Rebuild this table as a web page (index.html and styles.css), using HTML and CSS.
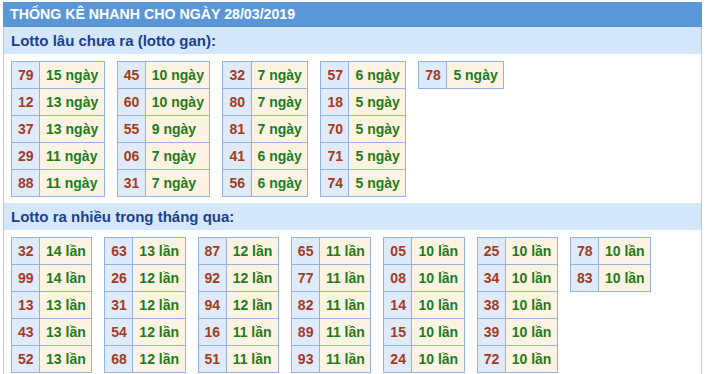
FILE: index.html
```html
<!DOCTYPE html>
<html lang="vi">
<head>
<meta charset="utf-8">
<title>Thống kê nhanh</title>
<link rel="stylesheet" href="styles.css">
</head>
<body>
<div class="box">
  <div class="head">THỐNG KÊ NHANH CHO NGÀY 28/03/2019</div>
  <div class="body">
    <div class="band">Lotto lâu chưa ra (lotto gan):</div>
    <div class="tables">
      <table><tr><td class="n">79</td><td class="d">15 ngày</td></tr><tr><td class="n">12</td><td class="d">13 ngày</td></tr><tr><td class="n">37</td><td class="d">13 ngày</td></tr><tr><td class="n">29</td><td class="d">11 ngày</td></tr><tr><td class="n">88</td><td class="d">11 ngày</td></tr></table>
      <table><tr><td class="n">45</td><td class="d">10 ngày</td></tr><tr><td class="n">60</td><td class="d">10 ngày</td></tr><tr><td class="n">55</td><td class="d">9 ngày</td></tr><tr><td class="n">06</td><td class="d">7 ngày</td></tr><tr><td class="n">31</td><td class="d">7 ngày</td></tr></table>
      <table><tr><td class="n">32</td><td class="d">7 ngày</td></tr><tr><td class="n">80</td><td class="d">7 ngày</td></tr><tr><td class="n">81</td><td class="d">7 ngày</td></tr><tr><td class="n">41</td><td class="d">6 ngày</td></tr><tr><td class="n">56</td><td class="d">6 ngày</td></tr></table>
      <table><tr><td class="n">57</td><td class="d">6 ngày</td></tr><tr><td class="n">18</td><td class="d">5 ngày</td></tr><tr><td class="n">70</td><td class="d">5 ngày</td></tr><tr><td class="n">71</td><td class="d">5 ngày</td></tr><tr><td class="n">74</td><td class="d">5 ngày</td></tr></table>
      <table><tr><td class="n">78</td><td class="d">5 ngày</td></tr></table>
    </div>
    <div class="band">Lotto ra nhiều trong tháng qua:</div>
    <div class="tables">
      <table><tr><td class="n">32</td><td class="d">14 lần</td></tr><tr><td class="n">99</td><td class="d">14 lần</td></tr><tr><td class="n">13</td><td class="d">13 lần</td></tr><tr><td class="n">43</td><td class="d">13 lần</td></tr><tr><td class="n">52</td><td class="d">13 lần</td></tr></table>
      <table><tr><td class="n">63</td><td class="d">13 lần</td></tr><tr><td class="n">26</td><td class="d">12 lần</td></tr><tr><td class="n">31</td><td class="d">12 lần</td></tr><tr><td class="n">54</td><td class="d">12 lần</td></tr><tr><td class="n">68</td><td class="d">12 lần</td></tr></table>
      <table><tr><td class="n">87</td><td class="d">12 lần</td></tr><tr><td class="n">92</td><td class="d">12 lần</td></tr><tr><td class="n">94</td><td class="d">12 lần</td></tr><tr><td class="n">16</td><td class="d">11 lần</td></tr><tr><td class="n">51</td><td class="d">11 lần</td></tr></table>
      <table><tr><td class="n">65</td><td class="d">11 lần</td></tr><tr><td class="n">77</td><td class="d">11 lần</td></tr><tr><td class="n">82</td><td class="d">11 lần</td></tr><tr><td class="n">89</td><td class="d">11 lần</td></tr><tr><td class="n">93</td><td class="d">11 lần</td></tr></table>
      <table><tr><td class="n">05</td><td class="d">10 lần</td></tr><tr><td class="n">08</td><td class="d">10 lần</td></tr><tr><td class="n">14</td><td class="d">10 lần</td></tr><tr><td class="n">15</td><td class="d">10 lần</td></tr><tr><td class="n">24</td><td class="d">10 lần</td></tr></table>
      <table><tr><td class="n">25</td><td class="d">10 lần</td></tr><tr><td class="n">34</td><td class="d">10 lần</td></tr><tr><td class="n">38</td><td class="d">10 lần</td></tr><tr><td class="n">39</td><td class="d">10 lần</td></tr><tr><td class="n">72</td><td class="d">10 lần</td></tr></table>
      <table><tr><td class="n">78</td><td class="d">10 lần</td></tr><tr><td class="n">83</td><td class="d">10 lần</td></tr></table>
    </div>
  </div>
</div>
</body>
</html>
```

FILE: styles.css
```css
html, body {
  margin: 0;
  padding: 0;
  background: #ffffff;
  font-family: "Liberation Sans", Arial, sans-serif;
}
.box {
  margin: 2px 0 0 3px;
  width: 699px;
}
.head {
  height: 25px;
  line-height: 25px;
  background: #5b97d7;
  color: #ffffff;
  font-weight: bold;
  font-size: 14.2px;
  padding-left: 7px;
  white-space: nowrap;
}
.body {
  border-left: 1px solid #c4c8d0;
  border-right: 1px solid #c4c8d0;
  height: 347px;
  overflow: hidden;
}
.band {
  height: 27px;
  line-height: 27px;
  background: #d5e7fa;
  color: #1d3f93;
  font-weight: bold;
  font-size: 15px;
  padding-left: 7px;
}
.tables {
  display: flex;
  align-items: flex-start;
  gap: 12px;
  padding: 7px 7px 6px;
}
table {
  border-collapse: collapse;
}
td {
  height: 26px;
  padding: 0 5.5px 0 6px;
  border: 1px solid #94b2e2;
  font-size: 14px;
  font-weight: bold;
  white-space: nowrap;
  box-sizing: border-box;
  line-height: 26px;
}
td.n {
  background: #dfeafb;
  color: #a33c1e;
}
td.d {
  background: #fdf3e2;
  color: #1d7c1d;
}
```
